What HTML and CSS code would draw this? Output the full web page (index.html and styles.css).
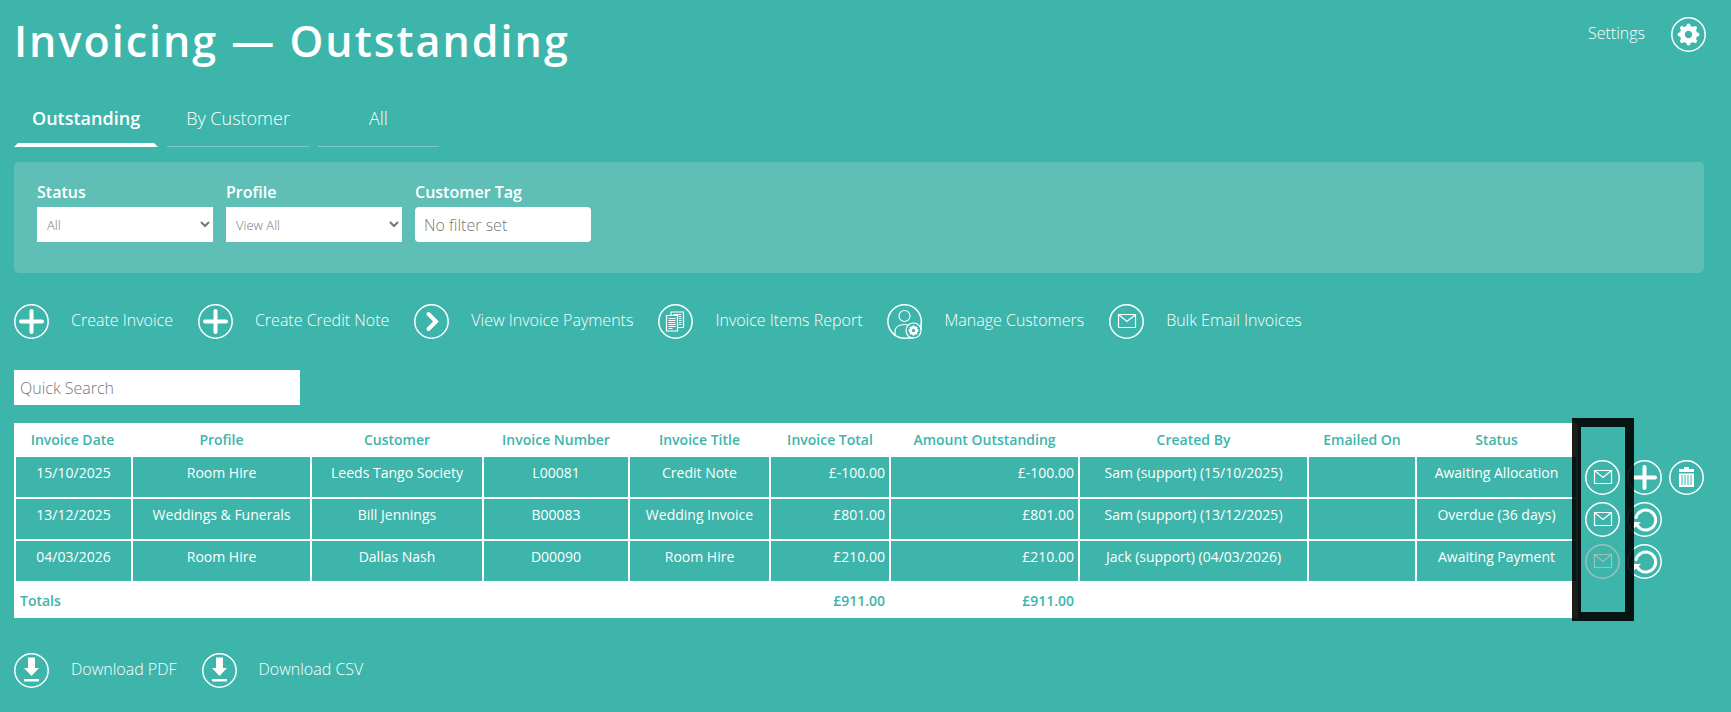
FILE: index.html
```html
<!DOCTYPE html>
<html lang="en">

<head>
  <meta charset="UTF-8" />
  <meta name="viewport" content="width=device-width, initial-scale=1" />
  <title>Invoicing — Outstanding</title>
  <link rel="stylesheet" href="styles.css">
</head>

<body>
  <!-- Icon set -->
  <svg class="icon-defs" aria-hidden="true">
    <symbol id="icon-plus" viewBox="0 0 35 35">
      <circle cx="17.500" cy="17.500" r="16.700" class="ring" />
      <path d="M17.500 7v21M7 17.500h21" class="thick" />
    </symbol>
    <symbol id="icon-next" viewBox="0 0 35 35">
      <circle cx="17.500" cy="17.500" r="16.700" class="ring" />
      <path d="M14.500 10l7.500 7.500-7.500 7.500" class="thick" />
    </symbol>
    <symbol id="icon-mail" viewBox="0 0 35 35">
      <circle cx="17.500" cy="17.500" r="16.700" class="ring" />
      <path d="M9.500 10.500h17v13h-17zM9.500 10.500l8.500 7 8.500-7" class="thin" />
    </symbol>
    <symbol id="icon-report" viewBox="0 0 35 35">
      <circle cx="17.500" cy="17.500" r="16.700" class="ring" />
      <path d="M8.500 11.500h11v15.500h-11zM13 11.500v-3.500h12.500v15.500h-6" class="thin" />
      <path d="M10.500 14.500h7M10.500 16.500h7M10.500 18.500h7M10.500 20.500h7M10.500 22.500h7M10.500 24.500h4M15 10.500h8M21 12.500h2.500M21 14.500h2.500M21 16.500h2.500M21 18.500h2.500M21 20.500h2.500" class="thin" />
    </symbol>
    <symbol id="icon-people" viewBox="0 0 35 35">
      <path d="M26.500 34H20A16.700 16.700 0 1 1 34 20.500V26" class="ring" />
      <circle cx="17.500" cy="12" r="5.500" class="thin" />
      <path d="M8 31v-3c0-5 4-7.500 9.500-7.500 1.500 0 2.500.2 3.500.6" class="thin" />
      <circle cx="26.500" cy="26.500" r="7.500" class="thin" />
      <circle cx="26.500" cy="26.500" r="3" class="cog" />
      <path d="M26.500 21.500v2M26.500 29.500v2M21.500 26.500h2M29.500 26.500h2M23 23l1.400 1.400M28.600 28.600L30 30M23 30l1.400-1.400M28.600 24.400L30 23" class="teeth" />
    </symbol>
    <symbol id="icon-cog" viewBox="0 0 35 35">
      <circle cx="17.500" cy="17.500" r="16.700" class="ring" />
      <circle cx="17.500" cy="17.500" r="6.200" class="cog-big" />
      <path d="M17.500 8.500v3M17.500 23.500v3M8.500 17.500h3M23.500 17.500h3M11 11l2.500 2.500M21.500 21.500l2.500 2.500M11 24l2.500-2.500M21.500 13.500l2.500-2.500" class="thick" />
    </symbol>
    <symbol id="icon-bin" viewBox="0 0 35 35">
      <circle cx="17.500" cy="17.500" r="16.700" class="ring" />
      <path d="M10 9h5V7h5v2h5v3H10zM10 13.500h15V27H10z" class="solid" />
      <path d="M13 15v10M16 15v10M19 15v10M22 15v10" class="cut" />
    </symbol>
    <symbol id="icon-redo" viewBox="0 0 35 35">
      <circle cx="17.500" cy="17.500" r="16.700" class="ring" />
      <path d="M9 15.500A10 10 0 1 1 12 25.500" class="arc" />
      <path d="M6 20h8l-2.500 2.500 2 2-2 2-2.500-2L6 27.500z" class="solid" />
    </symbol>
    <symbol id="icon-download" viewBox="0 0 35 35">
      <circle cx="17.500" cy="17.500" r="16.700" class="ring" />
      <path d="M14 4.500h7V15h4l-7.500 8L10 15h4zM10 26h15v2.500H10z" class="solid" />
    </symbol>
  </svg>

  <header class="page-header">
    <h1>Invoicing — Outstanding</h1>
    <a class="settings-link" href="#">
      Settings
      <svg class="icon"><use href="#icon-cog" /></svg>
    </a>
  </header>

  <main>
    <nav class="tabs">
      <a class="tab active" href="#">Outstanding</a>
      <a class="tab" href="#">By Customer</a>
      <a class="tab tab-all" href="#">All</a>
    </nav>

    <form class="filters">
      <div class="field">
        <label for="status">Status</label>
        <select id="status">
          <option>All</option>
        </select>
      </div>
      <div class="field">
        <label for="profile">Profile</label>
        <select id="profile">
          <option>View All</option>
        </select>
      </div>
      <div class="field">
        <label for="tag">Customer Tag</label>
        <input type="text" id="tag" placeholder="No filter set">
      </div>
    </form>

    <div class="links">
      <a href="#"><svg class="icon"><use href="#icon-plus" /></svg>Create Invoice</a>
      <a href="#"><svg class="icon"><use href="#icon-plus" /></svg>Create Credit Note</a>
      <a href="#"><svg class="icon"><use href="#icon-next" /></svg>View Invoice Payments</a>
      <a href="#"><svg class="icon"><use href="#icon-report" /></svg>Invoice Items Report</a>
      <a href="#"><svg class="icon"><use href="#icon-people" /></svg>Manage Customers</a>
      <a href="#"><svg class="icon"><use href="#icon-mail" /></svg>Bulk Email Invoices</a>
    </div>

    <input type="text" class="quick-search" placeholder="Quick Search" aria-label="Quick Search">

    <div class="table-wrap">
      <table>
        <colgroup>
          <col class="col-date">
          <col class="col-profile">
          <col class="col-customer">
          <col class="col-number">
          <col class="col-title">
          <col class="col-total">
          <col class="col-amount">
          <col class="col-created">
          <col class="col-emailed">
          <col class="col-status">
          <col class="col-actions">
        </colgroup>
        <thead>
          <tr>
            <th>Invoice Date</th>
            <th>Profile</th>
            <th>Customer</th>
            <th>Invoice Number</th>
            <th>Invoice Title</th>
            <th>Invoice Total</th>
            <th>Amount Outstanding</th>
            <th>Created By</th>
            <th>Emailed On</th>
            <th>Status</th>
            <td class="actions"></td>
          </tr>
        </thead>
        <tbody>
          <tr>
            <td>15/10/2025</td>
            <td>Room Hire</td>
            <td>Leeds Tango Society</td>
            <td>L00081</td>
            <td>Credit Note</td>
            <td class="money">£-100.00</td>
            <td class="money">£-100.00</td>
            <td>Sam (support) (15/10/2025)</td>
            <td></td>
            <td>Awaiting Allocation</td>
            <td class="actions">
              <div class="action-buttons">
                <button type="button" aria-label="Email invoice"><svg class="icon"><use href="#icon-mail" /></svg></button>
                <button type="button" aria-label="Allocate"><svg class="icon"><use href="#icon-plus" /></svg></button>
                <button type="button" aria-label="Delete"><svg class="icon"><use href="#icon-bin" /></svg></button>
              </div>
            </td>
          </tr>
          <tr>
            <td>13/12/2025</td>
            <td>Weddings &amp; Funerals</td>
            <td>Bill Jennings</td>
            <td>B00083</td>
            <td>Wedding Invoice</td>
            <td class="money">£801.00</td>
            <td class="money">£801.00</td>
            <td>Sam (support) (13/12/2025)</td>
            <td></td>
            <td>Overdue (36 days)</td>
            <td class="actions">
              <div class="action-buttons">
                <button type="button" aria-label="Email invoice"><svg class="icon"><use href="#icon-mail" /></svg></button>
                <button type="button" aria-label="Revert"><svg class="icon"><use href="#icon-redo" /></svg></button>
              </div>
            </td>
          </tr>
          <tr>
            <td>04/03/2026</td>
            <td>Room Hire</td>
            <td>Dallas Nash</td>
            <td>D00090</td>
            <td>Room Hire</td>
            <td class="money">£210.00</td>
            <td class="money">£210.00</td>
            <td>Jack (support) (04/03/2026)</td>
            <td></td>
            <td>Awaiting Payment</td>
            <td class="actions">
              <div class="action-buttons">
                <button type="button" aria-label="Email invoice" disabled><svg class="icon"><use href="#icon-mail" /></svg></button>
                <button type="button" aria-label="Revert"><svg class="icon"><use href="#icon-redo" /></svg></button>
              </div>
            </td>
          </tr>
        </tbody>
        <tfoot>
          <tr>
            <th class="totals" colspan="5">Totals</th>
            <th class="money">£911.00</th>
            <th class="money">£911.00</th>
            <th colspan="3"></th>
            <td class="actions"></td>
          </tr>
        </tfoot>
      </table>
      <!-- Frame round the email column -->
      <div class="email-frame"></div>
    </div>

    <div class="links downloads">
      <a href="#"><svg class="icon"><use href="#icon-download" /></svg>Download PDF</a>
      <a href="#"><svg class="icon"><use href="#icon-download" /></svg>Download CSV</a>
    </div>
  </main>
</body>

</html>
```

FILE: styles.css
```css
* {
  box-sizing: border-box;
}

body {
  margin: 0;
  background: #3db5ab;
  color: #fff;
  font-family: 'Open Sans', sans-serif;
  font-size: 16px;
  font-weight: 300;
}

a {
  color: #fff;
  text-decoration: none;
}

/* Icons */
.icon-defs {
  display: none;
}

.icon {
  display: block;
  width: 35px;
  height: 35px;
  flex: none;
  fill: none;
  stroke: currentColor;
}

.ring {
  stroke-width: 1.5;
}

.thin {
  stroke-width: 1.2;
}

.thick {
  stroke-width: 4;
  stroke-linecap: round;
}

.arc {
  stroke-width: 3;
  stroke-linecap: round;
}

.cog {
  stroke-width: 2.5;
}

.teeth {
  stroke-width: 2;
}

.cog-big {
  stroke-width: 5;
}

.solid {
  fill: currentColor;
  stroke: none;
}

.cut {
  stroke: #3db5ab;
  stroke-width: 1;
}

/* Header */
.page-header {
  display: flex;
  justify-content: space-between;
  align-items: flex-start;
  padding: 11px 25px 0 14px;
}

h1 {
  margin: 0;
  font-size: 43px;
  line-height: 60px;
  font-weight: 600;
  letter-spacing: 2px;
}

.settings-link {
  display: flex;
  gap: 26px;
  padding-top: 6px;
  line-height: 32px;
}

main {
  padding: 20px 27px 24px 14px;
}

/* Tabs */
.tabs {
  display: flex;
  gap: 9px;
  font-size: 18px;
  line-height: 24px;
}

.tab {
  padding: 15px 19px 16px;
  border-bottom: 1px solid #7dcac3;
}

.tab.active {
  padding: 15px 14px 13px;
  border: 4px solid transparent;
  border-top: 0;
  border-bottom-color: #fff;
  font-weight: 600;
}

.tab-all {
  padding-left: 51px;
  padding-right: 51px;
}

/* Filters */
.filters {
  display: flex;
  gap: 13px;
  margin-top: 15px;
  padding: 18px 23px 31px;
  background: #5fbfb6;
  border-radius: 5px;
}

.field {
  display: flex;
  flex-direction: column;
  gap: 3px;
  width: 176px;
}

.field label {
  line-height: 24px;
  font-weight: 600;
}

select,
input {
  height: 35px;
  border: 0;
  background: #fff;
  color: #777;
  font-family: inherit;
  font-size: 16px;
  font-weight: 300;
}

select {
  padding: 0 6px;
  font-size: 13px;
  border-radius: 0;
}

input {
  padding: 0 9px;
}

input::placeholder {
  color: #777;
}

.field input {
  border-radius: 4px;
}

/* Links with icons */
.links {
  display: flex;
  flex-wrap: wrap;
  gap: 25px;
  margin-top: 31px;
}

.links a {
  display: flex;
  gap: 22px;
  line-height: 32px;
}

.quick-search {
  display: block;
  width: 286px;
  margin: 31px 0 18px;
  padding: 0 6px;
}

/* Invoices table */
.table-wrap {
  position: relative;
}

table {
  width: 100%;
  table-layout: fixed;
  border-spacing: 0;
  font-size: 14px;
  line-height: 18px;
}

.col-date { width: 119px; }
.col-profile { width: 179px; }
.col-customer { width: 172px; }
.col-number { width: 146px; }
.col-title { width: 141px; }
.col-total { width: 120px; }
.col-amount { width: 189px; }
.col-created { width: 229px; }
.col-emailed { width: 108px; }
.col-status { width: 161px; }
.col-actions { width: 126px; }

th {
  height: 34px;
  padding: 0 6px 0 4px;
  background: #fff;
  color: #3db5ab;
  font-weight: 600;
}

td {
  height: 42px;
  padding: 7px 4px 0;
  border-right: 2px solid #fff;
  border-bottom: 2px solid #fff;
  font-weight: 400;
  text-align: center;
  vertical-align: top;
}

tbody td:first-child {
  border-left: 2px solid #fff;
}

.money {
  text-align: right;
}

tfoot th {
  height: 35px;
}

.totals {
  padding-left: 6px;
  text-align: left;
}

td.actions {
  height: auto;
  padding: 3px 0 0 7px;
  border: 0;
}

.action-buttons {
  display: flex;
  gap: 7px;
}

button {
  padding: 0;
  border: 0;
  background: none;
  color: #fff;
  cursor: pointer;
}

button:disabled {
  color: #9fc0bb;
  cursor: default;
}

.email-frame {
  position: absolute;
  top: -5px;
  right: 70px;
  bottom: -3px;
  width: 62px;
  border: 9px solid rgba(0, 0, 0, 0.89);
  pointer-events: none;
}

.downloads {
  margin-top: 35px;
}
```
